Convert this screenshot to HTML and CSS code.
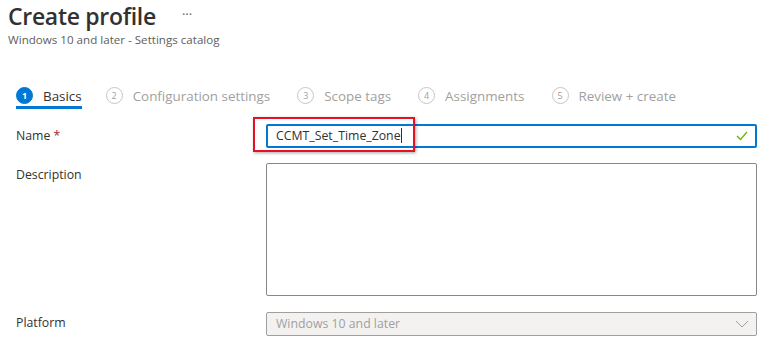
FILE: index.html
```html
<!DOCTYPE html>
<html lang="en">
<head>
    <meta charset="UTF-8">
    <title>Create profile</title>
    <link rel="stylesheet" href="styles.css">
</head>
<body>

<div class="header">
    <div class="title-row">
        <h1>Create profile</h1>
        <span class="more">&middot;&middot;&middot;</span>
    </div>
    <div class="subtitle">Windows 10 and later - Settings catalog</div>
</div>

<div class="steps">
    <div class="step active"><span class="num">1</span>Basics</div>
    <div class="step"><span class="num">2</span>Configuration settings</div>
    <div class="step"><span class="num">3</span>Scope tags</div>
    <div class="step"><span class="num">4</span>Assignments</div>
    <div class="step"><span class="num">5</span>Review + create</div>
</div>

<div class="form">
    <div class="label">Name <span class="req">*</span></div>
    <div class="field">
        <div class="text-input focused">CCMT_Set_Time_Zone<span class="caret"></span>
            <svg class="check" width="12" height="10" viewBox="0 0 12 10">
                <polyline points="1,5 4.5,8.5 11,1" fill="none" stroke="#6bb700" stroke-width="1.3"/>
            </svg>
        </div>
        <div class="highlight"></div>
    </div>

    <div class="label">Description</div>
    <div class="field">
        <div class="textarea"></div>
    </div>

    <div class="label">Platform</div>
    <div class="field">
        <div class="select">Windows 10 and later
            <svg class="chevron" width="14" height="8" viewBox="0 0 14 8">
                <polyline points="1,1 7,7 13,1" fill="none" stroke="#a19f9d" stroke-width="1"/>
            </svg>
        </div>
    </div>
</div>

</body>
</html>
```

FILE: styles.css
```css
body {
    margin: 0;
    background: #fff;
    font-family: 'Open Sans', 'Noto Sans', sans-serif;
    color: #323130;
    font-size: 12.3px;
}

.header {
    padding-left: 8px;
}
.title-row {
    display: flex;
    align-items: center;
    height: 32px;
}
h1 {
    margin: 0;
    font-size: 23px;
    font-weight: 600;
    line-height: 32px;
    letter-spacing: -0.3px;
}
.more {
    margin-left: 26px;
    font-size: 13px;
    color: #605e5c;
    margin-top: -4px;
}
.subtitle {
    font-size: 11.6px;
    line-height: 16px;
    color: #605e5c;
}

.steps {
    display: flex;
    margin-top: 37px;
    padding-left: 16px;
    gap: 27px;
}
.step {
    display: flex;
    align-items: center;
    height: 21px;
    color: #a19f9d;
    font-size: 13.4px;
    border-bottom: 3px solid transparent;
}
.step.active {
    color: #323130;
    border-bottom-color: #0078d4;
    margin-right: -3px;
}
.num {
    display: inline-flex;
    align-items: center;
    justify-content: center;
    width: 15px;
    height: 15px;
    border: 1px solid #c8c6c4;
    border-radius: 50%;
    font-size: 9px;
    margin-right: 10px;
    color: #a19f9d;
}
.step.active .num {
    background: #0078d4;
    border-color: #0078d4;
    color: #fff;
    font-weight: 700;
}

.form {
    display: grid;
    grid-template-columns: 250px 491px;
    row-gap: 15px;
    margin-top: 15px;
    padding-left: 16px;
}
.label {
    line-height: 24px;
}
.req {
    color: #a4262c;
}
.field {
    position: relative;
}

.text-input {
    position: relative;
    box-sizing: border-box;
    height: 24px;
    border: 2px solid #0078d4;
    border-radius: 2px;
    padding-left: 8px;
    line-height: 20px;
}
.caret {
    display: inline-block;
    width: 1px;
    height: 15px;
    background: #323130;
    vertical-align: -3px;
}
.check {
    position: absolute;
    right: 7px;
    top: 5px;
}
.highlight {
    position: absolute;
    left: -13px;
    top: -7px;
    width: 162px;
    height: 35px;
    box-sizing: border-box;
    border: 2px solid #e81123;
    box-shadow: 1px 1px 3px rgba(0, 0, 0, 0.35);
}

.textarea {
    box-sizing: border-box;
    height: 133px;
    border: 1px solid #8a8886;
    border-radius: 2px;
}
.select {
    position: relative;
    box-sizing: border-box;
    height: 24px;
    margin-top: 1px;
    border: 1px solid #a19f9d;
    border-radius: 2px;
    background: #f3f2f1;
    color: #a19f9d;
    padding-left: 9px;
    line-height: 22px;
}
.chevron {
    position: absolute;
    right: 7px;
    top: 7px;
}
```
